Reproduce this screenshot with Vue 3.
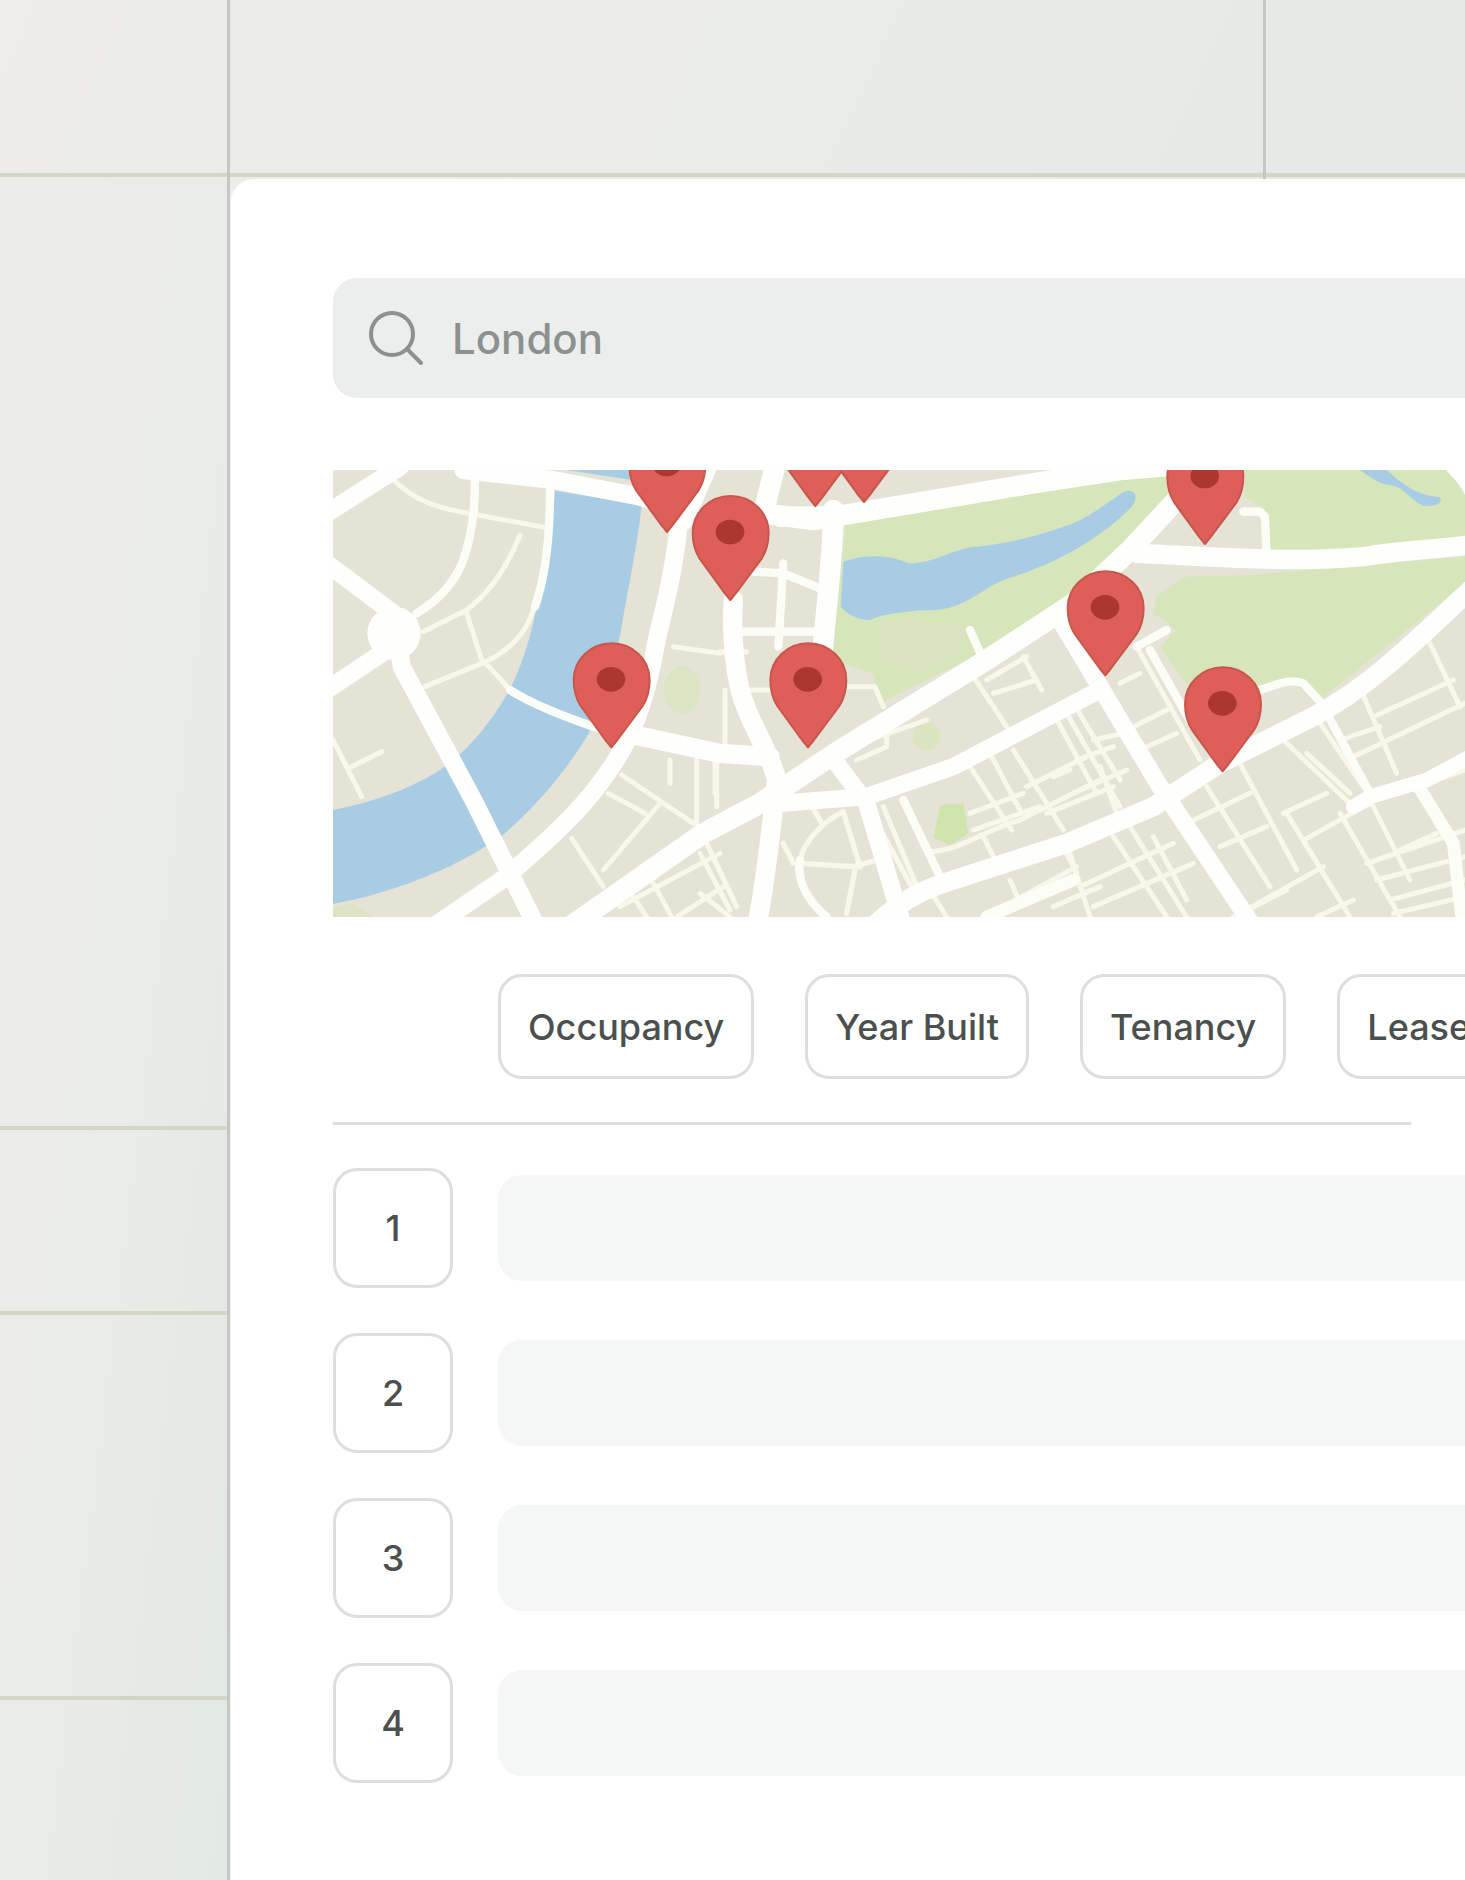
<script setup>
import { ref } from 'vue'

const query = ref('London')
const filters = ['Occupancy', 'Year Built', 'Tenancy', 'Lease']
const rows = [1, 2, 3, 4]

// Tip of each pin, in map units
const pins = [
  { x: 1041, y: 216 },
  { x: 1231, y: 420 },
  { x: 874, y: 862 },
  { x: 1486, y: 138 },
  { x: 1632, y: 126 },
  { x: 1464, y: 862 },
  { x: 2356, y: 646 },
  { x: 2655, y: 252 },
  { x: 2708, y: 934 },
]
</script>

<template>
  <div class="page">
    <div class="top-band"><span class="top-cell first"></span><span class="top-cell second"></span></div>
    <div class="body">
      <div class="side">
        <span class="side-cell tall"></span>
        <span class="side-cell short"></span>
        <span class="side-cell medium"></span>
      </div>
      <main class="card">
        <label class="search">
          <svg class="search-icon" viewBox="0 0 56 56" fill="none" stroke="#8b918f" stroke-width="4" stroke-linecap="round" aria-hidden="true">
            <circle cx="24" cy="24" r="21" />
            <path d="M39 39 53 53" />
          </svg>
          <input v-model="query" type="text" aria-label="Search location" />
        </label>

        <svg class="map" viewBox="39 30 3396 1341" preserveAspectRatio="xMinYMin slice" role="img" aria-label="Map of London">
          <rect x="39" y="30" width="3396" height="1341" fill="#e5e3d6" />

          <!-- parks -->
          <g fill="#d7e5ba">
            <path d="M1578 186 2340 62 2520 34 2620 30 2540 120 2400 330 2230 430 2020 560 1680 730 1660 640 1535 600Z" />
            <path d="M2775 30H3385L3435 90V250L2850 280 2835 150 2775 110Z" />
            <path d="M2590 350 2800 345 3435 290V370L3000 720 2900 660 2830 695 2620 700 2520 560 2570 510 2500 460 2510 410Z" />
            <ellipse cx="1086" cy="690" rx="54" ry="72" opacity=".7" />
            <path d="M1860 1035 1930 1030 1945 1120 1890 1155 1840 1135Z" fill="#d0e4ae" />
            <ellipse cx="1820" cy="830" rx="42" ry="42" opacity=".8" />
            <path d="M39 1345 100 1330 160 1371H39Z" opacity=".6" />
          </g>
          <g fill="#dde0c8" opacity=".6">
            <path d="M1680 480 1940 500 1900 590 1800 640 1680 600Z" />
          </g>

          <!-- water -->
          <g fill="#a9cce5">
            <path d="M705 92 965 135C955 240 925 380 905 500 890 590 850 720 805 822 740 930 650 1040 545 1128 400 1230 210 1300 39 1332V1050C150 1030 260 990 345 940 440 880 510 790 560 705 620 600 650 460 668 340 685 250 700 170 705 92Z" />
            <path d="M740 30H925L935 60Z" />
            <path d="M1570 305C1640 280 1710 285 1765 310 1840 310 1870 280 1950 262 2080 250 2180 220 2260 190 2330 160 2380 110 2420 92 2450 90 2455 115 2435 140 2350 230 2210 310 2080 350 2000 370 1950 440 1850 450 1780 450 1690 460 1650 480 1610 480 1580 460 1562 440Z" />
            <path d="M3120 30H3200C3250 75 3290 105 3360 112 3370 130 3350 140 3310 138 3260 110 3250 80 3210 75 3170 70 3150 50 3120 30Z" />
          </g>

          <!-- minor streets -->
          <g fill="none" stroke="#f9f7ea" stroke-width="15" stroke-linejoin="round" stroke-linecap="round">
            <path d="M210 50C270 110 330 140 420 155L690 205M600 225C570 300 520 390 440 450L310 515M440 460 485 600C530 640 560 680 570 690M640 450C620 520 560 580 485 610L315 680M39 840 125 1010M95 920 185 875" />
            <path d="M1060 560 1200 580M905 945 1120 1090M1130 890V1090M1050 900V970M865 1000 975 1060M1020 1030 850 1230M755 1135 850 1280M900 1340 1200 1180M1000 1270 1055 1371M1070 1371 1210 1280M1140 1180 1230 1350M1160 1150 1250 1340M1185 895V1000M940 1310 980 1371" />
            <path d="M1200 575H1280M1215 690V860M1275 690H1350M1190 910V1040M1140 1300 1230 1371" />
            <path d="M1570 680H1665L1690 740M1590 860 1820 780M1610 900 1700 860M1700 820V860M1960 650 2060 800M2000 660 2120 590M2020 700 2150 660M2110 590 2165 690M2200 760 2330 1000M2080 870 2230 1110M1950 920 2075 1110M2010 880 2100 1050M2260 730 2400 960M1830 1175C1930 1170 1990 1110 2100 1080L2340 960M1950 1060 2110 1000M1960 1110 2160 1040M1990 1130 2020 1190M2240 1180 2270 1240M2070 1260 2100 1330M2340 1280 2200 1340M1690 1040 1795 1290M1650 1050 1780 1290M2120 980 2300 890M2180 1060 2380 980M2200 950 2250 930" />
            <path d="M1460 1010 1505 1090M1570 1055C1500 1090 1450 1150 1440 1200M1570 1055 1620 1220M1440 1210 1600 1220 1670 1200M1605 1230 1580 1360M1390 1150 1420 1210" stroke-width="16" />
            <path d="M1830 1290 1880 1371M2050 1340 2270 1220" />
            <path d="M2240 760 2400 1040M2320 840 2410 820M2270 900 2380 860M2260 1000 2420 930M2340 920 2390 1060M2400 670 2460 640M2450 560 2640 900M2440 800 2540 750M2480 860 2570 820M2380 1130 2540 1371M2250 1180 2310 1371M2430 1100 2600 1371M2280 1280 2560 1150M2320 1340 2620 1210M2500 1130 2600 1320" />
            <path d="M2760 910 2930 1230M2890 840 3110 1050M2600 1090 2790 1000M2660 980 2850 1280M2700 1160 2840 1100M2890 1060 3020 1000M2900 1060 3090 1371M2760 1360 3010 1220M2980 760 3150 1010M3060 1060 3240 1371M2960 1135 3150 1030M3110 660 3230 940M3160 770 3400 660M3100 890 3435 730M3320 530 3420 740M3060 840 3180 800M3150 1020 3270 1260M3140 1210 3435 1110M3170 1260 3435 1190M3240 1170 3350 1120M3210 1320 3435 1260M3220 1360 3435 1310M2990 1371 3100 1320M2740 1371 2900 1290M2960 880 3090 1000M3290 980 3435 930" />
          </g>

          <!-- secondary streets -->
          <g fill="none" stroke="#fdfdf8" stroke-width="25" stroke-linejoin="round" stroke-linecap="round">
            <path d="M465 60C465 150 455 230 430 300 400 380 340 430 290 460M690 90C690 220 680 340 645 440" />
            <path d="M570 690C640 735 730 770 850 810M1215 330 1390 340 1500 385M1390 310 1375 560M1250 515H1500M1290 150H1360" />
            <path d="M1950 510 1990 600M2770 155H2820L2835 170 2840 290M2820 690C2880 670 2910 655 2950 670L3010 735M2450 560 2540 510M2490 570 2620 800" />
            <path d="M1440 1200C1430 1260 1460 1320 1520 1371M1640 1030 1750 1371M1750 1020 1860 1250M3010 740 3150 1000" />
            <path d="M2000 1371 2260 1260M3290 970 3400 1150 3425 1371" stroke-width="38" />
          </g>

          <!-- main roads -->
          <g fill="none" stroke="#fefefd" stroke-width="54" stroke-linejoin="round" stroke-linecap="round">
            <path d="M20 310 220 460 245 620 460 1020 650 1400M20 690 200 570M20 160 240 20" />
            <path d="M430 30 700 60 960 110 1080 150C1070 290 1040 420 1010 540 990 660 960 780 900 880 800 1050 670 1150 560 1250L340 1400" />
            <path d="M750 1400 1150 1120 1320 1030 1560 870 2000 600 2260 430 2430 270 2560 130 2640 30" stroke-width="62" />
            <path d="M920 820 1200 880 1350 890M1240 420C1235 500 1240 600 1260 690 1290 800 1350 870 1370 960 1350 1130 1340 1250 1310 1400" stroke-width="58" />
            <path d="M1090 180 1160 20M1365 20 1330 160 1480 180 1600 160 2140 70 2400 30 2640 10M1540 150C1540 280 1520 430 1505 600M1380 170H1540" stroke-width="62" />
            <path d="M1550 910 1640 1030 1750 1400M1380 1030 1640 1010 1900 920 2320 700M2220 480 2340 680 2520 980 2640 1160 2800 1400" stroke-width="52" />
            <path d="M1660 1400C1740 1320 1830 1280 1900 1260L2240 1150 2500 1040 2700 910 2980 770C3150 680 3290 540 3450 390" stroke-width="58" />
            <path d="M2450 280C2700 290 2900 310 3130 290 3250 270 3330 270 3450 255" stroke-width="58" />
            <path d="M3100 1040 3150 1010 3320 960 3450 890" stroke-width="44" />
          </g>
          <circle cx="222" cy="520" r="80" fill="#fefefd" />
          <path d="M3378 30C3405 60 3425 80 3435 105V30Z" fill="#fff" />

          <!-- pins -->
          <g v-for="pin in pins" :key="pin.x" :transform="`translate(${pin.x} ${pin.y})`">
            <path d="M0 0L-18-22-92-124C-106-146-113-176-113-202A114 110 0 0 1 115-202C115-176 108-146 94-124L18-22Z" fill="#de5f59" stroke="#c9554b" stroke-width="6" stroke-linejoin="round" />
            <ellipse cx="-1" cy="-204" rx="43" ry="37" fill="#ab372f" />
          </g>
        </svg>

        <div class="filters">
          <button v-for="name in filters" :key="name" type="button">{{ name }}</button>
        </div>

        <hr />

        <ol class="results">
          <li v-for="n in rows" :key="n">
            <span class="rank">{{ n }}</span>
            <span class="bar"></span>
          </li>
        </ol>
      </main>
    </div>
  </div>
</template>

<style>
body {
  margin: 0;
}
</style>

<style scoped>
.page {
  display: flex;
  flex-direction: column;
  min-height: 100vh;
  overflow: hidden;
  box-sizing: border-box;
  background: linear-gradient(115deg, #efedeb 0, #ecece8 9%, #e9ebe7 34%, #e5eae7 62%, #e3e9e5 100%);
  color: #4b504e;
  font-family: Inter, "Liberation Sans", sans-serif;
}

.top-band {
  display: flex;
  height: 179px;
  background: linear-gradient(#d3d6c5, #d3d6c5) 0 173px / 100% 4px no-repeat;
}

.top-cell {
  box-sizing: border-box;
  border-right: 3px solid #c3c8c3;
}

.first {
  width: 230px;
}

.second {
  width: 1036px;
}

.body {
  display: flex;
  flex: 1;
}

.side {
  flex: none;
  width: 227px;
  border-right: 3px solid #c3c8c3;
  background: linear-gradient(97deg, #ecede8 0, #e9ebe6 55%, #e3e9e5 95%, #e2e9e5 100%);
}

.side-cell {
  display: block;
  box-sizing: border-box;
  border-bottom: 4px solid #d3d6c5;
}

.tall {
  height: 951px;
}

.short {
  height: 185px;
}

.medium {
  height: 385px;
}

.card {
  flex: 1;
  min-width: 0;
  padding: 99px 0 99px 102px;
  border-left: 1px solid #f3f5f3;
  border-radius: 24px 0 0 0;
  background: #fff;
}

.search {
  display: flex;
  align-items: center;
  gap: 28px;
  height: 120px;
  padding-left: 35px;
  border-radius: 24px 0 0 24px;
  background: #ebeeed;
}

.search-icon {
  flex: none;
  width: 56px;
  height: 56px;
}

.search input {
  flex: 1;
  min-width: 0;
  padding: 2px 0 0;
  border: 0;
  outline: 0;
  background: none;
  color: #8b918f;
  font: 500 42px/56px Inter, "Liberation Sans", sans-serif;
}

.map {
  display: block;
  width: 100%;
  height: 447px;
  margin-top: 72px;
}

.filters {
  display: flex;
  gap: 51px;
  margin: 57px 0 43px;
  padding-left: 165px;
  overflow: hidden;
}

.filters button {
  flex: none;
  height: 105px;
  padding: 0 27px;
  border: 3px solid #dcdfde;
  border-radius: 24px;
  background: #fff;
  color: #4b504e;
  font: 500 36px/48px Inter, "Liberation Sans", sans-serif;
}

hr {
  height: 3px;
  margin: 0 54px 43px 0;
  border: 0;
  background: #dcdfde;
}

.results {
  display: flex;
  flex-direction: column;
  gap: 45px;
  margin: 0;
  padding: 0;
  list-style: none;
}

.results li {
  display: flex;
  align-items: center;
  gap: 45px;
}

.rank {
  display: flex;
  flex: none;
  align-items: center;
  justify-content: center;
  box-sizing: border-box;
  width: 120px;
  height: 120px;
  border: 3px solid #dcdfde;
  border-radius: 24px;
  font: 500 36px/48px Inter, "Liberation Sans", sans-serif;
}

.bar {
  flex: 1;
  height: 106px;
  border-radius: 24px 0 0 24px;
  background: #f5f7f6;
}
</style>
